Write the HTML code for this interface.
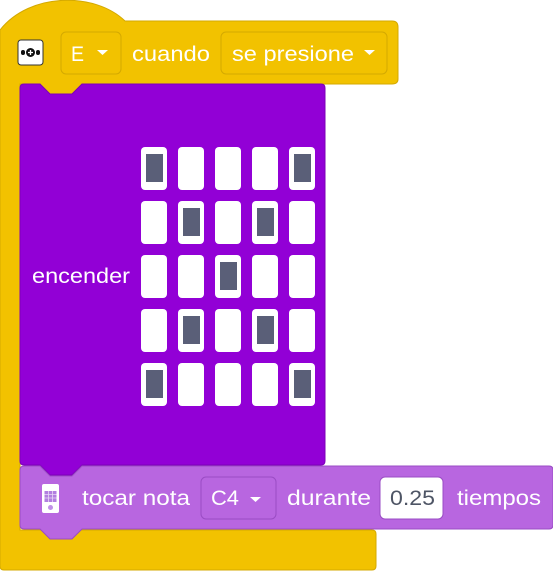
<!DOCTYPE html>
<html><head><style>
html,body{margin:0;padding:0;background:#fff;width:553px;height:571px;overflow:hidden}
svg{display:block}
text{font-family:"Liberation Sans",sans-serif;font-size:21px;fill:#fff}
</style></head><body>
<svg width="553" height="571" viewBox="0 0 553 571" xmlns="http://www.w3.org/2000/svg">
<path d="M0,30 C30,-8 95,-8 125,21 L392,21 Q398,21 398,27 L398,79 Q398,84 392,84 L82,84 L72,94 L50,94 L40,84 L20,84 L20,465 L20,530 L372,530 Q376,530 376,534 L376,566 Q376,570 372,570 L4,570 Q0,570 0,566 Z" fill="#f2c200" stroke="#d4a900" stroke-width="1"/>
<path d="M20,88 Q20,84 24,84 L40,84 L50,94 L72,94 L82,84 L321,84 Q325,84 325,88 L325,461 Q325,465 321,465 L82,465 L72,475 L50,475 L40,465 L24,465 Q20,465 20,461 Z" fill="#9200d6" stroke="#7d00b8" stroke-width="1"/>
<path d="M20,470 Q20,466 24,466 L40,466 L50,476 L72,476 L82,466 L549,466 Q553,466 553,470 L553,525 Q553,529 549,529 L82,529 L72,539 L50,539 L40,529 L24,529 Q20,529 20,525 Z" fill="#b866e0" stroke="#9a4cc4" stroke-width="1"/>
<rect x="18" y="40" width="25" height="25" rx="3" fill="#fff" stroke="#333" stroke-width="1"/>
<circle cx="30.5" cy="52.5" r="4.5" fill="#111"/>
<rect x="21" y="50" width="4" height="5" rx="2" fill="#111"/><rect x="36" y="50" width="4" height="5" rx="2" fill="#111"/>
<path d="M30.5,50v5M28,52.5h5" stroke="#fff" stroke-width="1.3"/>
<rect x="61" y="32" width="60" height="42" rx="5" fill="#f2c200" stroke="#d4a900"/>
<text x="71" y="61" textLength="13" lengthAdjust="spacingAndGlyphs">E</text>
<path d="M97,50h11l-5.5,5z" fill="#fff"/>
<text x="132" y="61" textLength="78" lengthAdjust="spacingAndGlyphs">cuando</text>
<rect x="221" y="32" width="166" height="42" rx="5" fill="#f2c200" stroke="#d4a900"/>
<text x="232" y="61" textLength="122" lengthAdjust="spacingAndGlyphs">se presione</text>
<path d="M364,50h11l-5.5,5z" fill="#fff"/>
<text x="32" y="283" textLength="98" lengthAdjust="spacingAndGlyphs">encender</text>
<g fill="#fff">
<rect x="141" y="147" width="26" height="43" rx="4"/><rect x="178" y="147" width="26" height="43" rx="4"/><rect x="215" y="147" width="26" height="43" rx="4"/><rect x="252" y="147" width="26" height="43" rx="4"/><rect x="289" y="147" width="26" height="43" rx="4"/>
<rect x="141" y="201" width="26" height="43" rx="4"/><rect x="178" y="201" width="26" height="43" rx="4"/><rect x="215" y="201" width="26" height="43" rx="4"/><rect x="252" y="201" width="26" height="43" rx="4"/><rect x="289" y="201" width="26" height="43" rx="4"/>
<rect x="141" y="255" width="26" height="43" rx="4"/><rect x="178" y="255" width="26" height="43" rx="4"/><rect x="215" y="255" width="26" height="43" rx="4"/><rect x="252" y="255" width="26" height="43" rx="4"/><rect x="289" y="255" width="26" height="43" rx="4"/>
<rect x="141" y="309" width="26" height="43" rx="4"/><rect x="178" y="309" width="26" height="43" rx="4"/><rect x="215" y="309" width="26" height="43" rx="4"/><rect x="252" y="309" width="26" height="43" rx="4"/><rect x="289" y="309" width="26" height="43" rx="4"/>
<rect x="141" y="363" width="26" height="43" rx="4"/><rect x="178" y="363" width="26" height="43" rx="4"/><rect x="215" y="363" width="26" height="43" rx="4"/><rect x="252" y="363" width="26" height="43" rx="4"/><rect x="289" y="363" width="26" height="43" rx="4"/>
</g>
<g fill="#5a5f78">
<rect x="146" y="154" width="17" height="28"/><rect x="294" y="154" width="17" height="28"/>
<rect x="183" y="208" width="17" height="28"/><rect x="257" y="208" width="17" height="28"/>
<rect x="220" y="262" width="17" height="28"/>
<rect x="183" y="316" width="17" height="28"/><rect x="257" y="316" width="17" height="28"/>
<rect x="146" y="370" width="17" height="28"/><rect x="294" y="370" width="17" height="28"/>
</g>
<rect x="42" y="484" width="17" height="29" rx="2" fill="#fff"/>
<rect x="44.5" y="491" width="12" height="11" fill="#b27fe0"/>
<path d="M44.5,494.5h12M44.5,498h12M48.5,491v11M52.5,491v11" stroke="#e8d8f6" stroke-width="0.8"/>
<circle cx="50.5" cy="507.5" r="2.5" fill="#c090e8"/>
<text x="82" y="505" textLength="108" lengthAdjust="spacingAndGlyphs">tocar nota</text>
<rect x="201" y="477" width="75" height="42" rx="5" fill="#b866e0" stroke="#9a4cc4"/>
<text x="211" y="505" textLength="28" lengthAdjust="spacingAndGlyphs">C4</text>
<path d="M250,497h11l-5.5,5z" fill="#fff"/>
<text x="287" y="505" textLength="84" lengthAdjust="spacingAndGlyphs">durante</text>
<rect x="380" y="477" width="63" height="42" rx="5" fill="#fff" stroke="#9a4cc4"/>
<text x="390" y="505" style="fill:#4e5565" textLength="45" lengthAdjust="spacingAndGlyphs">0.25</text>
<text x="457" y="505" textLength="84" lengthAdjust="spacingAndGlyphs">tiempos</text>
</svg>
</body></html>
